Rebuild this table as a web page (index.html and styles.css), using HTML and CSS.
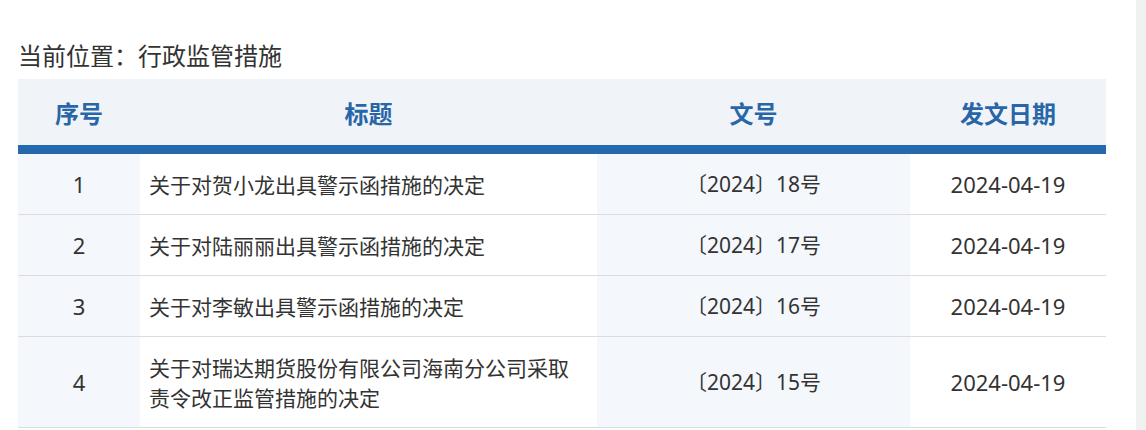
FILE: index.html
```html
<!DOCTYPE html>
<html lang="zh-CN">
<head>
    <meta charset="UTF-8">
    <title>行政监管措施</title>
    <link rel="stylesheet" href="styles.css">
</head>
<body>
<div class="page">
  <div class="main">
    <div class="crumb">当前位置：行政监管措施</div>
    <table class="list">
      <colgroup>
        <col class="c-no">
        <col class="c-title">
        <col class="c-doc">
        <col class="c-date">
      </colgroup>
      <thead>
        <tr>
          <th>序号</th>
          <th>标题</th>
          <th>文号</th>
          <th>发文日期</th>
        </tr>
      </thead>
      <tbody>
        <tr>
          <td class="no">1</td>
          <td class="title">关于对贺小龙出具警示函措施的决定</td>
          <td class="doc">〔2024〕18号</td>
          <td class="date">2024-04-19</td>
        </tr>
        <tr>
          <td class="no">2</td>
          <td class="title">关于对陆丽丽出具警示函措施的决定</td>
          <td class="doc">〔2024〕17号</td>
          <td class="date">2024-04-19</td>
        </tr>
        <tr>
          <td class="no">3</td>
          <td class="title">关于对李敏出具警示函措施的决定</td>
          <td class="doc">〔2024〕16号</td>
          <td class="date">2024-04-19</td>
        </tr>
        <tr>
          <td class="no">4</td>
          <td class="title">关于对瑞达期货股份有限公司海南分公司采取责令改正监管措施的决定</td>
          <td class="doc">〔2024〕15号</td>
          <td class="date">2024-04-19</td>
        </tr>
      </tbody>
    </table>
  </div>
  <div class="rail"></div>
</div>
</body>
</html>
```

FILE: styles.css
```css
html, body {
  margin: 0;
  height: 430px;
  overflow: hidden;
  background: #fff;
}

body {
  font-family: "Noto Sans CJK SC", "Noto Sans", sans-serif;
  color: #333;
}

.page {
  display: flex;
  height: 100%;
}

.main {
  flex: 1;
  padding: 35px 29px 0 18px;
}

.rail {
  width: 10px;
  background: #f1f1f1;
}

.crumb {
  font-size: 24px;
  line-height: 40px;
  height: 44px;
  color: #333;
}

.list {
  width: 1088px;
  border-collapse: collapse;
  table-layout: fixed;
}

.c-no { width: 122px; }
.c-title { width: 457px; }
.c-doc { width: 313px; }
.c-date { width: 196px; }

.list thead th {
  height: 66px;
  padding: 0;
  background: #f0f4f9;
  color: #2866a8;
  font-size: 24px;
  font-weight: bold;
  text-align: center;
  border-bottom: 9px solid #2469ad;
}

.list tbody td {
  padding: 15px 10px;
  font-family: "Noto Sans", "Noto Sans CJK SC", sans-serif;
  font-size: 21px;
  line-height: 30px;
  text-align: center;
  border-bottom: 1px solid #dcdcdc;
}

.list td.no,
.list td.doc {
  background: #f4f7fb;
}

.list td.no,
.list td.date {
  font-size: 22px;
}

.list td.title {
  font-family: "Noto Sans CJK SC", sans-serif;
  text-align: left;
  padding-left: 9px;
}
```
